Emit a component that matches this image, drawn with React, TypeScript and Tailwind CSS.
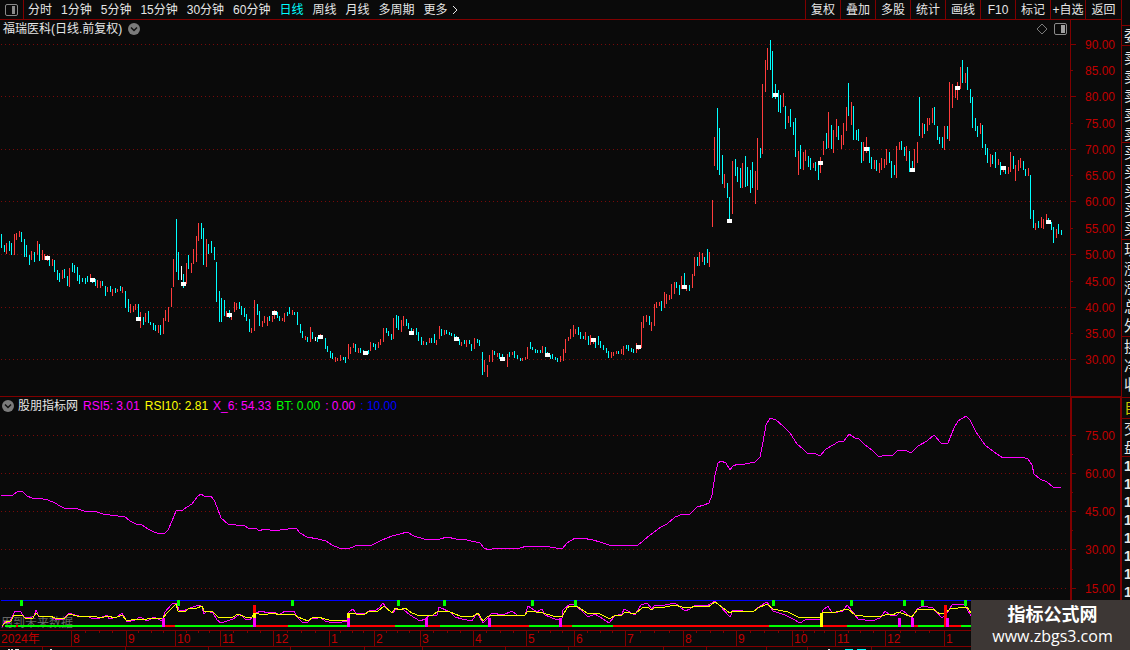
import { clsx } from "clsx";

type TPoint = [number, number];

const periods = [
  "分时",
  "1分钟",
  "5分钟",
  "15分钟",
  "30分钟",
  "60分钟",
  "日线",
  "周线",
  "月线",
  "多周期",
];

const tools = ["复权", "叠加", "多股", "统计", "画线", "F10", "标记", "+自选"];

// d = down, u = up, w = unchanged; then the top and bottom of the bar
const barData = `
d234-248 d245-252 u243-254 d241-251 d243-255 u234-255 u233-240 u231-237 d232-242 d239-257
d245-257 d255-265 u251-260 d252-262 u241-255 d244-261 u250-260 u254-260 u255-261 d258-266
u259-266 d260-272 d270-280 d273-282 u270-279 d269-278 d276-286 u268-287 d263-272 d265-273
d267-281 d275-284 d278-282 d278-284 d276-282 u274-280 d278-283 d279-286 u280-288 u281-288
d281-286 d286-296 u287-292 d286-292 u289-296 d288-293 u289-292 d286-291 u287-293 d291-308
d299-312 u304-313 u306-312 u304-310 d304-321 u312-328 d317-325 u313-322 d311-323 d322-325
d323-330 d325-331 u325-333 d325-335 u318-334 u310-321 u307-322 u288-307 u259-287 d219-272
d252-280 w266-280 d274-288 u263-284 d255-269 u263-273 u249-264 u236-262 u223-241 d223-239
d228-265 u239-267 d244-254 d241-253 d247-260 d262-302 d291-322 d298-322 d300-316 u311-317
d310-318 u314-320 u302-312 u303-310 d302-309 d306-315 d308-317 d314-321 d319-332 u328-333
u300-331 d304-315 d311-326 u321-327 u316-323 u317-326 d316-321 u316-322 u310-319 d312-318
d316-321 u318-321 u313-322 d312-316 d307-314 u310-315 d312-315 d312-325 d324-333 d331-338
u336-340 d337-342 u327-342 d332-339 w337-341 d337-342 u334-339 w336-339 d338-349 d346-352
d351-358 d353-359 u357-362 u358-361 u355-361 d357-360 d357-363 u344-359 u347-354 u343-348
d344-352 u348-353 d348-353 d350-353 d351-354 d350-354 u342-351 d343-347 d344-350 u342-348
u339-345 u328-342 d328-333 d331-336 d334-340 u318-339 d315-328 d316-330 u320-332 u316-326
d319-326 d323-329 d328-333 u329-334 d328-335 d332-341 d337-345 u341-345 d342-345 u338-343
d338-343 d334-343 u340-345 u326-339 d329-336 u330-335 d330-334 d332-335 d333-336 d334-338
d336-340 d339-345 u342-346 d340-344 u340-347 d340-344 d344-351 u338-349 d339-343 d340-346
d352-375 u360-372 u365-377 u355-362 u350-362 d351-355 u353-357 d353-359 d354-359 w358-360
u354-367 d352-357 u352-355 d351-358 d355-359 d358-361 u358-361 u357-360 u347-359 d342-349
d347-350 d349-353 d350-353 d350-353 u346-353 d347-354 d352-356 d355-359 d354-359 d357-360
d358-362 u356-362 u349-361 u339-353 u337-341 u329-339 u325-337 u329-334 d327-335 d332-339
d336-339 u332-340 d336-345 u335-345 u338-344 d341-348 d336-345 d341-348 d345-350 d348-353
d351-358 u352-358 u352-356 u351-354 d351-354 u349-354 u346-355 d345-349 d345-351 d348-352
d349-353 u343-353 u347-350 u322-348 u316-328 u315-322 d316-325 u322-331 u304-326 u302-308
u302-306 d301-311 u292-308 u294-304 u295-300 u284-299 u282-294 d282-288 d285-295 u276-289
d273-286 u285-291 d285-291 u274-288 u257-276 d257-266 u252-266 u253-262 d257-265 d249-263
u252-267 u200-227 u137-166 d108-170 d128-175 d155-184 u174-188 d183-198 d197-221 u161-214
d159-176 d167-182 d168-188 u163-188 d156-187 d167-186 d170-193 d162-188 u171-204 u138-190
d148-158 u84-154 u60-92 u48-70 d40-70 d51-98 d84-99 d90-112 d95-113 u93-107
d106-129 u116-123 d109-127 d122-135 d118-157 u151-175 d145-169 u152-170 u150-161 d156-167
d158-170 u163-168 d162-171 d161-180 u157-173 u141-155 d133-149 u112-148 d125-149 u130-153
u119-137 d126-140 u135-149 u123-145 u107-131 d83-116 u102-125 d106-140 d130-140 d129-141
d142-163 u142-161 u137-153 d147-163 d157-169 u160-169 d160-171 u163-173 u158-170 u159-168
u149-165 d152-163 d161-178 d165-175 u146-178 u142-150 d141-150 d147-156 u146-161 d151-172
d161-170 u149-168 u142-163 d97-136 u123-138 d124-134 u118-131 u118-125 u108-123 d107-125
d126-140 d137-144 d137-148 u126-150 d126-139 u82-141 u84-108 u90-98 u82-100 u67-89
d60-83 u73-83 d67-90 d89-103 d97-128 d118-131 d126-137 u123-134 d125-148 d144-155
d148-163 u154-167 d155-164 d152-168 u159-165 d162-175 u166-172 d169-174 u167-174 u152-172
d156-169 u165-181 u160-171 u158-168 d161-170 d169-176 u168-176 d175-219 d210-228 u223-230
d221-228 u217-228 u219-229 u214-222 d218-223 d222-230 d227-243 u229-238 d224-234 d230-235
`;

const barColors: Record<string, string> = {
  d: "#00ffff",
  u: "#ff3c3c",
  w: "#ffffff",
};

const barX = (i: number) => Math.floor(1.6 + i * 2.529);

const bars = barData
  .trim()
  .split(/\s+/)
  .map((item, i) => {
    const [top, bottom] = item.slice(1).split("-").map(Number);
    return { x: barX(i), top, bottom, color: barColors[item[0]] };
  });

// one marker every 18 bars
const markerTops = [
  256, 278, 317, 282, 313, 311, 335, 351, 331, 337, 357, 353, 338, 345, 285,
  219, 93, 161, 147, 168, 86, 166, 220,
];

const priceGrid = [44, 96, 149, 201, 254, 307, 359];
const priceTicks = [
  { y: 44, label: "90.00" },
  { y: 70, label: "85.00", minor: true },
  { y: 96, label: "80.00" },
  { y: 123, label: "75.00", minor: true },
  { y: 149, label: "70.00" },
  { y: 175, label: "65.00", minor: true },
  { y: 201, label: "60.00" },
  { y: 228, label: "55.00", minor: true },
  { y: 254, label: "50.00" },
  { y: 281, label: "45.00", minor: true },
  { y: 307, label: "40.00" },
  { y: 333, label: "35.00", minor: true },
  { y: 359, label: "30.00" },
];

const rsiGrid = [435, 473, 511, 549, 588];
const rsiTicks = [
  { y: 435, label: "75.00" },
  { y: 454, minor: true },
  { y: 473, label: "60.00" },
  { y: 492, minor: true },
  { y: 511, label: "45.00" },
  { y: 530, minor: true },
  { y: 549, label: "30.00" },
  { y: 569, minor: true },
  { y: 588, label: "15.00" },
];

const rsiLine =
  "1,496 3,495 5,496 8,495 13,495 17,492 20,491 23,492 27,496 32,498 38,498 48,500 55,503 60,506 66,509 72,508 78,509 84,511 90,511 97,512 103,514 110,515 118,516 124,516 130,521 136,524 142,525 148,529 154,532 160,534 165,533 168,530 172,521 176,511 183,510 187,507 192,504 197,497 201,494 204,496 211,496 214,500 217,507 221,518 228,524 236,525 244,525 248,528 256,528 259,531 264,529 270,530 280,530 288,529 293,528 297,529 300,533 307,537 318,539 326,541 332,545 339,548 348,549 355,546 372,545 382,540 392,536 400,534 407,532 414,536 424,539 428,540 440,539 447,537 456,539 467,540 480,543 484,548 489,550 495,548 508,549 520,548 527,546 540,546 550,547 562,549 567,543 575,538 582,538 593,540 600,542 612,546 638,545 643,541 650,535 657,530 661,527 667,524 675,517 683,514 690,514 697,507 704,505 709,503 712,495 715,475 718,463 721,461 726,463 730,470 733,466 738,464 745,464 755,462 760,457 763,442 766,425 770,418 776,420 783,426 790,433 797,444 803,449 808,454 814,453 820,456 826,449 833,445 838,442 844,441 849,434 855,438 859,439 865,445 872,450 879,457 886,455 892,456 898,450 905,450 911,453 918,446 927,441 934,435 941,443 948,443 954,428 958,421 966,416 970,420 976,432 985,445 994,452 1003,458 1009,457 1025,458 1028,459 1032,465 1034,474 1040,479 1047,482 1053,487 1061,488";

const slowLine =
  "2,626 5,623 8,621 11,621 14,615 22,615 25,618 33,618 36,613 39,616 50,616 55,618 65,618 69,614 77,616 97,617 100,618 108,616 115,618 122,615 127,621 135,619 147,619 153,618 162,619 167,613 176,604 178,611 185,612 188,609 197,608 202,606 204,611 213,612 218,617 227,618 233,617 238,614 245,617 251,618 255,613 263,615 273,613 280,615 294,614 298,617 303,619 308,621 312,618 318,617 325,619 333,621 347,620 349,613 363,615 370,611 377,612 384,606 392,613 395,608 400,610 405,608 412,613 420,616 433,615 438,611 450,612 460,616 472,617 478,613 483,621 487,617 491,615 498,615 503,616 525,615 528,611 543,613 553,616 562,617 567,608 570,606 578,607 587,613 600,614 610,619 615,615 622,615 625,612 635,614 642,608 647,607 652,610 655,607 665,607 675,605 682,607 690,608 695,606 708,607 715,602 722,607 730,613 733,611 753,612 758,608 767,604 773,609 788,612 798,617 812,617 820,617 823,612 833,613 843,610 848,609 855,615 863,616 880,617 887,614 893,615 898,612 912,617 918,609 933,609 940,614 945,613 950,609 967,607 971,613";

const fastLine =
  "2,627 5,621 9,623 12,617 15,611 21,612 24,617 30,618 34,616 36,610 39,617 50,616 55,619 63,619 69,613 75,615 82,617 87,616 93,619 100,618 107,615 109,619 117,617 122,613 127,622 135,620 140,617 147,621 154,617 162,621 165,612 172,604 177,603 179,610 183,611 193,607 199,605 202,607 204,614 207,611 213,613 217,620 221,623 227,621 233,619 240,614 245,619 250,620 255,613 262,611 267,613 275,612 279,615 285,611 294,611 297,617 302,622 307,623 312,618 316,619 320,617 325,621 333,623 342,622 347,621 349,612 353,609 356,613 365,614 370,610 375,611 380,607 383,603 388,610 393,613 396,609 403,609 410,615 420,621 425,619 430,615 437,615 439,607 450,612 455,617 462,619 467,620 472,621 477,613 483,623 487,619 492,613 503,615 512,611 517,615 525,615 528,606 537,612 542,609 545,615 557,620 562,618 563,610 570,604 575,605 582,611 588,617 595,614 603,619 609,623 615,616 622,614 624,609 635,615 641,605 647,603 652,609 655,605 665,605 675,603 685,611 690,609 695,605 707,606 715,601 720,606 730,617 733,610 753,612 760,606 767,602 773,611 785,615 793,619 800,623 805,620 820,619 823,610 828,606 832,613 843,611 847,605 852,611 858,619 872,621 880,618 885,611 890,615 897,615 902,610 912,618 917,609 923,606 933,608 942,618 947,613 952,605 964,604 971,616";

const G = "#00ff00";
const R = "#ff0000";
const Y = "#ffff00";
const M = "#ff00ff";

const greenMarks = [20, 177, 291, 397, 443, 531, 574, 772, 850, 903, 921, 964];

// start of each coloured run on the base line
const baseRuns: [number, string][] = [
  [5, G],
  [16, R],
  [18, G],
  [163, R],
  [175, G],
  [255, R],
  [288, G],
  [349, R],
  [395, G],
  [426, R],
  [440, G],
  [490, R],
  [529, G],
  [561, R],
  [572, G],
  [613, R],
  [769, G],
  [821, R],
  [847, G],
  [914, R],
  [918, G],
  [944, R],
  [961, G],
  [1062, G],
];

// x, top, bottom, colour
const signals: [number, number, number, string][] = [
  [162, 618, 627, M],
  [253, 605, 613, R],
  [253, 613, 618, Y],
  [253, 618, 627, M],
  [347, 613, 618, Y],
  [347, 618, 627, M],
  [425, 618, 627, M],
  [488, 618, 627, M],
  [559, 618, 627, M],
  [820, 613, 627, Y],
  [898, 618, 627, M],
  [911, 618, 627, M],
  [944, 605, 627, R],
  [946, 618, 627, M],
];

const indicators = [
  { text: "RSI5: 3.01", className: "text-[#ff00ff]" },
  { text: "RSI10: 2.81", className: "text-[#ffff00]" },
  { text: "X_6: 54.33", className: "text-[#ff00ff]" },
  { text: "BT: 0.00", className: "text-[#00ff00]" },
  { text: ": 0.00", className: "text-[#ff00ff]" },
  { text: ": 10.00", className: "text-[#0000ff]" },
];

const months = [
  { label: "2024年", width: 71 },
  { label: "8", width: 55 },
  { label: "9", width: 49 },
  { label: "10", width: 45 },
  { label: "11", width: 53 },
  { label: "12", width: 56 },
  { label: "1", width: 45 },
  { label: "2", width: 46 },
  { label: "3", width: 53 },
  { label: "4", width: 53 },
  { label: "5", width: 48 },
  { label: "6", width: 51 },
  { label: "7", width: 58 },
  { label: "8", width: 53 },
  { label: "9", width: 56 },
  { label: "10", width: 43 },
  { label: "11", width: 50 },
  { label: "12", width: 59 },
  { label: "1", width: 126 },
];

const quoteGroups = [
  { rows: ["委"], className: "h-[20px]" },
  { rows: ["卖", "卖", "卖", "卖", "卖"], className: "h-[97px] pt-[2px]" },
  { rows: ["买", "买", "买", "买", "买"], className: "h-[97px]" },
  { rows: ["现", "涨", "涨", "总", "外"], className: "h-[97px]" },
  { rows: ["换", "净", "收"], className: "h-[61px]" },
  { rows: ["自"], className: "h-[21px] text-[#c8c800]" },
  { rows: ["交", "盘"], className: "h-[38px]" },
];

const PanelIcon = ({ filled = false }: { filled?: boolean }) => (
  <svg
    className="shrink-0"
    width="13"
    height="12"
    viewBox="0 0 13 12"
    fill="none"
  >
    <rect x="0.5" y="0.5" width="12" height="11" rx="1.5" stroke="#8a8a8a" />
    <rect
      x="7"
      y="2"
      width={filled ? 4 : 3}
      height="8"
      fill={filled ? "#a0a0a0" : "#8a8a8a"}
    />
  </svg>
);

const ChevronBadge = () => (
  <svg width="12" height="12" viewBox="0 0 12 12" fill="none">
    <circle cx="6" cy="6" r="6" fill="#7b7b7b" />
    <path d="M3 4.5 6 7.5 9 4.5" stroke="#111" strokeWidth="1.5" />
  </svg>
);

const GridLines = ({ rows }: { rows: number[] }) => (
  <>
    {rows.map((y) => (
      <path
        key={y}
        d={`M1 ${y + 0.5}H1067`}
        stroke="#780a0a"
        strokeDasharray="1 3"
      />
    ))}
  </>
);

type TAxisProps = {
  top: number;
  height: number;
  thick?: boolean;
  ticks: { y: number; label?: string; minor?: boolean }[];
};

const ValueAxis = ({ top, height, thick, ticks }: TAxisProps) => (
  <svg
    className="w-[51px] shrink-0"
    height={height}
    viewBox={`0 ${top} 51 ${height}`}
    shapeRendering="crispEdges"
  >
    <rect x="0" y={top} width={thick ? 2 : 1} height={height} fill="#800000" />
    {thick && (
      <>
        <rect x="0" y={top} width="51" height="1" fill="#800000" />
        <rect x="50" y={top} width="1" height={height} fill="#800000" />
      </>
    )}
    {ticks.map(({ y, label, minor }) => (
      <g key={y}>
        <rect x="1" y={y} width={minor ? 2 : 5} height="1" fill="#800000" />
        {label && (
          <text x="15" y={y + 5} fontSize="12" fill="#c00000">
            {label}
          </text>
        )}
      </g>
    ))}
  </svg>
);

const Toolbar = () => (
  <header className="flex h-[20px] items-stretch border-b border-[#800000] whitespace-nowrap">
    <button
      aria-label="侧栏"
      className="flex w-[24px] shrink-0 items-center border-r border-[#800000] pl-[5px]"
    >
      <PanelIcon />
    </button>
    <nav className="flex flex-1 items-center gap-[9px] pl-1">
      {periods.map((name) => (
        <button
          key={name}
          className={clsx(name === "日线" && "text-[#00ffff]")}
        >
          {name}
        </button>
      ))}
      <button className="flex items-center gap-1">
        更多
        <svg width="6" height="10" viewBox="0 0 6 10" fill="none">
          <path d="M1 1 5 5 1 9" stroke="#e6e6e6" />
        </svg>
      </button>
    </nav>
    {tools.map((name) => (
      <button
        key={name}
        className="w-[35px] shrink-0 border-l border-[#800000] text-center"
      >
        {name}
      </button>
    ))}
    <button className="w-[36px] shrink-0 border-l border-[#800000] text-center">
      返回
    </button>
  </header>
);

const PricePanel = () => (
  <section className="flex">
    <div className="min-w-0 flex-1">
      <div className="flex h-[18px] items-center gap-[6px] pr-[3px] pl-[3px]">
        <h1 className="leading-[18px]">福瑞医科(日线.前复权)</h1>
        <button aria-label="展开">
          <ChevronBadge />
        </button>
        <svg
          className="ml-auto"
          width="12"
          height="12"
          viewBox="0 0 12 12"
          fill="none"
        >
          <path d="M6 1 11 6 6 11 1 6Z" stroke="#7a7a7a" />
        </svg>
        <button aria-label="面板">
          <PanelIcon filled />
        </button>
      </div>
      <svg
        className="block h-[358px] w-full"
        viewBox="0 38 1070 358"
        preserveAspectRatio="none"
        shapeRendering="crispEdges"
      >
        <GridLines rows={priceGrid} />
        {bars.map(({ x, top, bottom, color }) => (
          <rect
            key={x}
            x={x}
            y={top}
            width="1"
            height={bottom - top}
            fill={color}
          />
        ))}
        {markerTops.map((top, i) => (
          <rect
            key={i}
            x={barX((i + 1) * 18) - 2}
            y={top}
            width="5"
            height="4"
            fill="#fff"
          />
        ))}
      </svg>
    </div>
    <ValueAxis top={20} height={376} ticks={priceTicks} />
  </section>
);

const IndicatorPanel = () => (
  <section className="flex border-t border-[#800000]">
    <div className="min-w-0 flex-1">
      <div className="flex h-[17px] items-center gap-[5px] pl-[2px] whitespace-nowrap">
        <div className="flex items-center gap-1">
          <button aria-label="指标">
            <ChevronBadge />
          </button>
          <h2>股朋指标网</h2>
        </div>
        {indicators.map(({ text, className }) => (
          <span key={text} className={className}>
            {text}
          </span>
        ))}
      </div>
      <svg
        className="block h-[216px] w-full"
        viewBox="0 414 1070 216"
        preserveAspectRatio="none"
        shapeRendering="crispEdges"
      >
        <GridLines rows={rsiGrid} />
        <polyline points={rsiLine} fill="none" stroke="#ff00ff" />
        <text x="1" y="627" fontSize="12" fill="#666">
          用到未来数据
        </text>
        <rect x="1" y="600" width="1061" height="1" fill="#0000ff" />
        <polyline points={fastLine} fill="none" stroke="#ff00ff" />
        <polyline points={slowLine} fill="none" stroke="#ffff00" />
        {baseRuns.slice(0, -1).map(([x, color], i) => (
          <rect
            key={x}
            x={x}
            y="625"
            width={baseRuns[i + 1][0] - x}
            height="2"
            fill={color}
          />
        ))}
        {signals.map(([x, top, bottom, color], i) => (
          <rect
            key={i}
            x={x}
            y={top}
            width="3"
            height={bottom - top}
            fill={color}
          />
        ))}
        {greenMarks.map((x) => (
          <rect key={x} x={x} y="600" width="3" height="6" fill={G} />
        ))}
      </svg>
    </div>
    <ValueAxis top={397} height={233} thick ticks={rsiTicks} />
  </section>
);

const TimeAxis = () => (
  <div className="flex h-[17px] border-y border-[#800000] text-[#c00000]">
    <div
      className="grid min-w-0 flex-1"
      style={{
        gridTemplateColumns: months
          .map(({ width }) => `minmax(0, ${width}fr)`)
          .join(" "),
      }}
    >
      {months.map(({ label }, i) => (
        <div key={i} className={clsx(i > 0 && "border-l border-[#800000]")}>
          <div className="flex h-[2px]">
            {i > 0 &&
              [0, 1, 2, 3].map((tick) => (
                <span
                  key={tick}
                  className={clsx(
                    "flex-1",
                    tick > 0 && "border-l border-[#800000]"
                  )}
                />
              ))}
          </div>
          <div className="pl-px leading-[13px]">{label}</div>
        </div>
      ))}
    </div>
    <div className="w-[51px]" />
  </div>
);

const statusBits: TPoint[] = [
  [8, 2],
  [11, 2],
  [15, 2],
  [17, 2],
  [50, 2],
];

const StatusStrip = () => (
  <svg
    className="block h-[3px] w-full"
    viewBox="0 0 1121 3"
    preserveAspectRatio="none"
    shapeRendering="crispEdges"
  >
    {[42, 125, 208, 290, 364, 422, 505, 568, 663, 706, 766, 807, 871].map(
      (x) => (
        <rect key={x} x={x} y="0" width="1" height="3" fill="#800000" />
      )
    )}
    {statusBits.map(([x, y]) => (
      <rect key={x} x={x} y={y} width="2" height="1" fill="#e6e6e6" />
    ))}
    <rect x="828" y="2" width="2" height="1" fill="#e6e6e6" />
    <rect x="845" y="2" width="8" height="1" fill="#00ffff" />
    <rect x="857" y="2" width="9" height="1" fill="#00ffff" />
  </svg>
);

const QuoteStrip = () => (
  <aside className="flex w-[9px] shrink-0 flex-col overflow-hidden border-l border-[#800000] pt-[25px] text-[15px] leading-[19px]">
    {quoteGroups.map(({ rows, className }, i) => (
      <div
        key={i}
        className={clsx(
          "shrink-0 overflow-hidden border-t border-[#800000] pl-[2px]",
          className
        )}
      >
        {rows.map((row, j) => (
          <div key={j} className="w-[15px]">
            {row}
          </div>
        ))}
      </div>
    ))}
    <div className="h-0 flex-1 overflow-hidden border-t border-[#800000] pl-[2px] text-[14px] leading-[18px] font-bold">
      {Array.from({ length: 10 }, (_, i) => (
        <div key={i}>1</div>
      ))}
    </div>
  </aside>
);

const App = () => {
  return (
    <div className="relative flex overflow-hidden bg-[#0a0a0a] font-['Liberation_Sans','Noto_Sans_CJK_SC',sans-serif] text-[12px] leading-[16px] text-[#e6e6e6]">
      <main className="min-w-0 flex-1">
        <Toolbar />
        <PricePanel />
        <IndicatorPanel />
        <TimeAxis />
        <StatusStrip />
      </main>
      <QuoteStrip />
      <div className="absolute right-0 bottom-0 flex h-[50px] w-[159px] flex-col items-center justify-center bg-[#3d3735] pl-1 text-white">
        <strong className="text-[18px] leading-[22px]">指标公式网</strong>
        <a
          href="#"
          className="font-['Open_Sans','Noto_Sans',sans-serif] text-[16px] leading-[20px]"
        >
          www.zbgs3.com
        </a>
      </div>
    </div>
  );
};

export default App;
